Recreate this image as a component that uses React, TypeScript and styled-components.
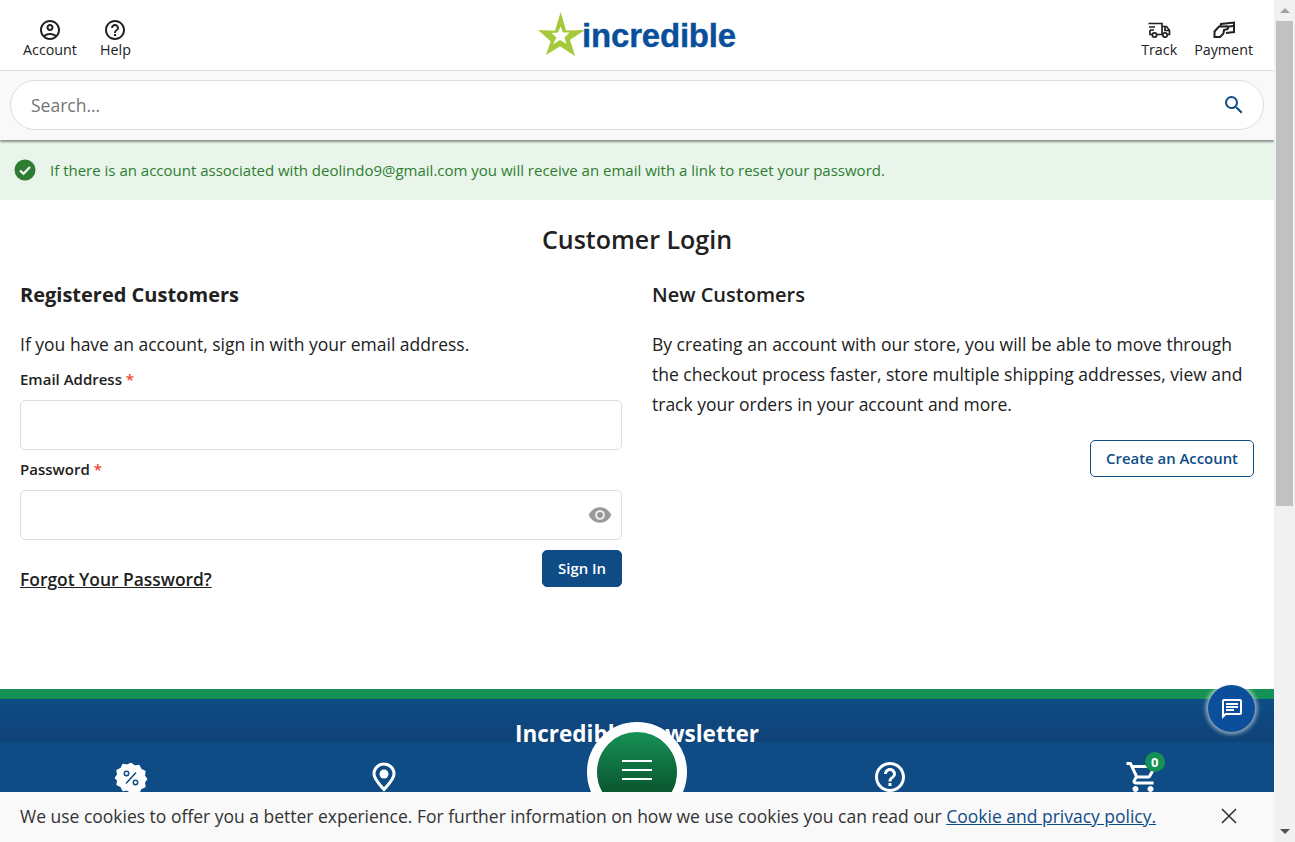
import styled, { createGlobalStyle } from 'styled-components'

const GlobalStyle = createGlobalStyle`
  html, body {
    margin: 0;
    padding: 0;
    height: 100%;
    overflow: hidden;
    background: #fff;
  }
  body {
    font-family: 'Open Sans', 'Noto Sans', sans-serif;
    color: #212121;
  }
  * {
    box-sizing: border-box;
  }
`

const Shell = styled.div`
  display: flex;
  height: 842px;
  width: 1295px;
  overflow: hidden;
`
const Page = styled.div`
  position: relative;
  flex: 0 0 1274px;
  height: 842px;
  overflow: hidden;
`
const Rail = styled.div`
  flex: 0 0 21px;
  display: flex;
  flex-direction: column;
  align-items: center;
  padding: 0 2px 0 2px;
  background: #f1f1f1;
`
const RailButton = styled.div`
  flex: 0 0 21px;
  display: flex;
  align-items: center;
  justify-content: center;
`
const Arrow = styled.span<{ $down?: boolean }>`
  width: 0;
  height: 0;
  border-left: 5px solid transparent;
  border-right: 5px solid transparent;
  ${(p) => (p.$down ? 'border-top: 5px solid #505050;' : 'border-bottom: 5px solid #a3a3a3;')}
`
const RailThumb = styled.div`
  width: 100%;
  height: 485px;
  background: #c1c1c1;
`
const RailSpace = styled.div`
  flex: 1;
`

const Header = styled.header`
  height: 71px;
  border-bottom: 1px solid #ddd;
  display: grid;
  grid-template-columns: 1fr auto 1fr;
  align-items: start;
  padding: 0 21px 0 23px;
`
const HeaderLinks = styled.div<{ $right?: boolean }>`
  display: flex;
  gap: ${(p) => (p.$right ? '17px' : '23px')};
  padding-top: 18px;
  justify-content: ${(p) => (p.$right ? 'flex-end' : 'flex-start')};
`
const HeaderLink = styled.a`
  display: flex;
  flex-direction: column;
  align-items: center;
  font-size: 14.3px;
  line-height: 20px;
  color: #212121;
  svg {
    display: block;
    margin-bottom: -2px;
  }
`
const Logo = styled.a`
  display: flex;
  align-items: center;
  height: 70px;
  padding-right: 2px;
  svg {
    margin-bottom: 2px;
  }
`
const LogoText = styled.span`
  padding-top: 2px;
  font-family: 'Liberation Sans', Arial, sans-serif;
  font-size: 33px;
  font-weight: 700;
  letter-spacing: -0.2px;
  color: #0b4f9c;
  margin-left: -3px;
  -webkit-text-stroke: 0.4px #0b4f9c;
`
const SearchBand = styled.div`
  position: relative;
  height: 69px;
  padding: 9px 10px 10px;
  background: #f9f9f9;
  box-shadow: 0 2px 2px rgba(0, 0, 0, 0.4);
`
const SearchBox = styled.div`
  height: 50px;
  display: flex;
  align-items: center;
  justify-content: space-between;
  padding: 0 17px 0 20px;
  background: #fff;
  border: 1px solid #ddd;
  border-radius: 25px;
`
const SearchPlaceholder = styled.span`
  font-size: 17.5px;
  color: #757575;
`
const Alert = styled.div`
  height: 60px;
  display: flex;
  align-items: center;
  gap: 14px;
  padding-left: 14px;
  background: #e9f5ea;
  color: #2e7d32;
  font-size: 15px;
`
const Main = styled.main`
  height: 489px;
  padding: 0 20px;
`
const Title = styled.h1`
  margin: 0;
  padding-top: 22px;
  text-align: center;
  font-size: 25px;
  line-height: 34px;
  font-weight: 600;
  color: #212121;
`
const Columns = styled.div`
  display: grid;
  grid-template-columns: 602px 602px;
  column-gap: 30px;
  margin-top: 24px;
`
const SectionTitle = styled.h2<{ $bold?: boolean }>`
  margin: 0 0 19px;
  font-size: 20px;
  line-height: 30px;
  font-weight: ${(p) => (p.$bold ? 700 : 600)};
  color: #212121;
`
const Copy = styled.p`
  margin: 0;
  padding-bottom: 1px;
  font-size: 17.5px;
  line-height: 30px;
  color: #212121;
`
const FieldLabel = styled.label`
  display: block;
  font-size: 15px;
  line-height: 20px;
  font-weight: 600;
  margin-top: 9px;
  color: #212121;
`
const Star = styled.span`
  color: #f44336;
`
const Field = styled.div`
  height: 50px;
  margin-top: 11px;
  display: flex;
  align-items: center;
  justify-content: flex-end;
  padding-right: 9px;
  background: #fff;
  border: 1px solid #ddd;
  border-radius: 5px;
  svg {
    stroke: #999;
    stroke-width: 0.5;
  }
`
const FormFooter = styled.div`
  display: flex;
  justify-content: space-between;
  align-items: flex-start;
  margin-top: 10px;
`
const ForgotLink = styled.a`
  margin-top: 14px;
  font-size: 17.4px;
  line-height: 30px;
  font-weight: 600;
  color: #212121;
  text-decoration: underline;
`
const Button = styled.a<{ $outline?: boolean }>`
  display: inline-flex;
  align-items: center;
  justify-content: center;
  height: 37px;
  padding: 0 15px 2px;
  border-radius: 5px;
  font-size: 14.9px;
  font-weight: 600;
  border: 1px solid #0f4c85;
  color: ${(p) => (p.$outline ? '#0f4c85' : '#fff')};
  background: ${(p) => (p.$outline ? '#fff' : '#0f4c85')};
`
const RightAction = styled.div`
  display: flex;
  justify-content: flex-end;
  margin-top: 20px;
`
const Footer = styled.footer`
  height: 53px;
  border-top: 10px solid #169155;
  background: linear-gradient(#0f4c85, #0f4278);
  text-align: center;
  color: #fff;
  font-size: 22.5px;
  line-height: 70px;
  font-weight: 700;
`
const BottomNav = styled.nav`
  position: absolute;
  left: 0;
  right: 0;
  bottom: 50px;
  height: 50px;
  background: #0f4c85;
  display: grid;
  grid-template-columns: repeat(5, 1fr);
  justify-items: center;
  padding: 0 5px;
`
const NavItem = styled.a`
  position: relative;
  padding-top: 17px;
  color: #fff;
  svg {
    display: block;
  }
`
const CartCount = styled.span`
  position: absolute;
  top: 10px;
  right: -4px;
  width: 20px;
  height: 20px;
  border-radius: 50%;
  background: #169155;
  color: #fff;
  font-size: 13px;
  font-weight: 700;
  line-height: 20px;
  text-align: center;
`
const MenuRing = styled.button`
  position: absolute;
  left: 587px;
  bottom: 50px;
  width: 100px;
  height: 70px;
  overflow: hidden;
  padding: 0;
  border: 0;
  background: none;
  cursor: pointer;
`
const MenuDisc = styled.span`
  display: flex;
  flex-direction: column;
  justify-content: center;
  align-items: center;
  gap: 7px;
  width: 100px;
  height: 100px;
  padding-bottom: 4px;
  border: 10px solid #fff;
  border-radius: 50%;
  background: linear-gradient(#169155, #0b5a32 70%);
`
const MenuBar = styled.span`
  display: block;
  width: 30px;
  height: 2px;
  background: #fff;
`
const Cookie = styled.div`
  position: absolute;
  left: 0;
  right: 0;
  bottom: 0;
  height: 50px;
  display: flex;
  align-items: center;
  justify-content: space-between;
  padding: 0 37px 2px 20px;
  background: #f9f9f9;
  font-size: 17.49px;
  color: #333;
`
const CookieLink = styled.a`
  color: #0f4c85;
  text-decoration: underline;
`
const ChatButton = styled.button`
  position: absolute;
  left: 1208px;
  top: 685px;
  width: 47px;
  height: 47px;
  display: flex;
  align-items: center;
  justify-content: center;
  padding: 0;
  border: 0;
  border-radius: 50%;
  background: #0b4f9c;
  color: #fff;
  box-shadow: 0 0 4px 2px rgba(255, 255, 255, 0.65), 0 1px 3px rgba(0, 0, 0, 0.4);
`

const LogoStar = () => (
  <svg width="47" height="44" viewBox="0 0 47 44" aria-hidden="true">
    <path
      fill="#a4c93a"
      d="M22.7 0L28 18.500L47 18L32 27.700L37 44L22 34.300L8 43L12.700 29.300L0 18L17 18.700Z"
    />
    <path
      fill="#fff"
      d="M22.500 14.500L25 20.500L31.500 20.500L26.500 25.500L28.500 32L22 28L15 32.500L18.500 25.500L13.500 21L20 20.500Z"
    />
  </svg>
)

const App = () => {
  return (
    <Shell>
      <GlobalStyle />
      <Page>
        <Header>
          <HeaderLinks>
            <HeaderLink>
              <svg width="24" height="24" viewBox="0 0 24 24" fill="currentColor">
                <path d="M12 2C6.480 2 2 6.480 2 12s4.480 10 10 10 10-4.480 10-10S17.520 2 12 2zM7.350 18.500C8.660 17.560 10.260 17 12 17s3.340.56 4.650 1.500C15.340 19.440 13.740 20 12 20s-3.340-.56-4.650-1.500zm10.790-1.380C16.450 15.830 14.320 15 12 15s-4.450.83-6.140 2.120C4.700 15.730 4 13.950 4 12c0-4.420 3.580-8 8-8s8 3.580 8 8c0 1.950-.7 3.730-1.860 5.120zM12 6c-1.930 0-3.500 1.570-3.500 3.500S10.070 13 12 13s3.500-1.570 3.500-3.500S13.930 6 12 6zm0 5c-.83 0-1.500-.67-1.500-1.500S11.170 8 12 8s1.500.67 1.500 1.500S12.830 11 12 11z" />
              </svg>
              Account
            </HeaderLink>
            <HeaderLink>
              <svg width="24" height="24" viewBox="0 0 24 24" fill="currentColor">
                <path d="M11 18h2v-2h-2v2zm1-16C6.480 2 2 6.480 2 12s4.480 10 10 10 10-4.480 10-10S17.520 2 12 2zm0 18c-4.410 0-8-3.590-8-8s3.590-8 8-8 8 3.590 8 8-3.590 8-8 8zm0-14c-2.210 0-4 1.790-4 4h2c0-1.100.9-2 2-2s2 .9 2 2c0 2-3 1.750-3 5h2c0-2.250 3-2.500 3-5 0-2.210-1.790-4-4-4z" />
              </svg>
              Help
            </HeaderLink>
          </HeaderLinks>
          <Logo>
            <LogoStar />
            <LogoText>incredible</LogoText>
          </Logo>
          <HeaderLinks $right>
            <HeaderLink>
              <svg width="24" height="24" viewBox="0 0 24 24" fill="none" stroke="currentColor" strokeWidth="1.700">
                <path d="M1.500 5.500H15V16.500H10" />
                <path d="M15 8.500h4.500l3 4v4h-2" />
                <path d="M18 8.500v4h4.500" />
                <path d="M2 9h6M3 12h4M3 12v4.500h2" />
                <circle cx="7.500" cy="17" r="2.200" />
                <circle cx="18" cy="17" r="2.200" />
              </svg>
              Track
            </HeaderLink>
            <HeaderLink>
              <svg width="24" height="24" viewBox="0 0 24 24" fill="none" stroke="currentColor" strokeWidth="2">
                <path d="M8.500 8L9 6L22 4.500V14L14 15" />
                <path d="M9 9.300L22 8" />
                <path d="M2.500 13.500L7 8.500H15c1.500 0 1.500 2.600 0 2.800L12 12c0 3-1 4.500-2.500 5.500L8 19H2.500Z" fill="#fff" />
              </svg>
              Payment
            </HeaderLink>
          </HeaderLinks>
        </Header>
        <SearchBand>
          <SearchBox>
            <SearchPlaceholder>Search...</SearchPlaceholder>
            <svg width="24" height="24" viewBox="0 0 24 24" fill="#0f4c85">
              <path d="M15.500 14h-.79l-.28-.27A6.470 6.470 0 0 0 16 9.500 6.500 6.500 0 1 0 9.500 16c1.610 0 3.090-.59 4.230-1.570l.27.28v.79l5 4.990L20.490 19l-4.990-5zm-6 0C7.010 14 5 11.990 5 9.500S7.010 5 9.500 5 14 7.010 14 9.500 11.990 14 9.500 14z" />
            </svg>
          </SearchBox>
        </SearchBand>
        <Alert>
          <svg width="22" height="22" viewBox="0 0 22 22">
            <circle cx="11" cy="11" r="10.500" fill="#2e7d32" />
            <path d="M6 11.500l3.500 3.300 6.500-6.800" fill="none" stroke="#fff" strokeWidth="2.200" />
          </svg>
          If there is an account associated with deolindo9@gmail.com you will receive an email with a link to reset your password.
        </Alert>
        <Main>
          <Title>Customer Login</Title>
          <Columns>
            <section>
              <SectionTitle $bold>Registered Customers</SectionTitle>
              <Copy>If you have an account, sign in with your email address.</Copy>
              <FieldLabel>
                Email Address <Star>*</Star>
              </FieldLabel>
              <Field />
              <FieldLabel>
                Password <Star>*</Star>
              </FieldLabel>
              <Field>
                <svg width="24" height="24" viewBox="0 0 24 24" fill="#999">
                  <path d="M12 4.500C7 4.500 2.730 7.610 1 12c1.730 4.390 6 7.500 11 7.500s9.270-3.110 11-7.500c-1.730-4.390-6-7.500-11-7.500zM12 17c-2.760 0-5-2.240-5-5s2.240-5 5-5 5 2.240 5 5-2.240 5-5 5zm0-8c-1.660 0-3 1.340-3 3s1.340 3 3 3 3-1.340 3-3-1.340-3-3-3z" />
                </svg>
              </Field>
              <FormFooter>
                <ForgotLink>Forgot Your Password?</ForgotLink>
                <Button>Sign In</Button>
              </FormFooter>
            </section>
            <section>
              <SectionTitle>New Customers</SectionTitle>
              <Copy>
                By creating an account with our store, you will be able to move through the checkout process faster, store multiple shipping addresses, view and track your orders in your account and more.
              </Copy>
              <RightAction>
                <Button $outline>Create an Account</Button>
              </RightAction>
            </section>
          </Columns>
        </Main>
        <Footer>Incredible Newsletter</Footer>
        <BottomNav>
          <NavItem>
            <svg width="36" height="36" viewBox="-2 -3 36 36">
              <path
                fill="#fff"
                stroke="#fff"
                strokeWidth="1.500"
                strokeLinejoin="round"
                d="M16 1.500l3.700 2.700 4.300-.7 1.900 4 4 1.900-.7 4.300 2.300 3.300-2.300 3.300.7 4.300-4 1.900-1.900 4-4.300-.7L16 30.500l-3.700-2.700-4.300.7-1.900-4-4-1.900.7-4.300L.5 16l2.300-3.300-.7-4.300 4-1.900 1.900-4 4.300.7z"
              />
              <path d="M11 21.500L21 10.500" stroke="#0f4c85" strokeWidth="1.500" />
              <circle cx="11.500" cy="11.500" r="2.200" fill="none" stroke="#0f4c85" strokeWidth="1.500" />
              <circle cx="20.500" cy="20.500" r="2.200" fill="none" stroke="#0f4c85" strokeWidth="1.500" />
            </svg>
          </NavItem>
          <NavItem>
            <svg width="36" height="36" viewBox="-6 -3 36 36">
              <path
                fill="none"
                stroke="#fff"
                strokeWidth="3"
                d="M12 27.500C7 22 2 17 2 12a10 10 0 0 1 20 0c0 5-5 10-10 15.500z"
              />
              <circle cx="12" cy="12" r="4.500" fill="#fff" />
            </svg>
          </NavItem>
          <span />
          <NavItem>
            <svg width="36" height="36" viewBox="0 0 24 24" fill="#fff">
              <path d="M11 18h2v-2h-2v2zm1-16C6.480 2 2 6.480 2 12s4.480 10 10 10 10-4.480 10-10S17.520 2 12 2zm0 18c-4.410 0-8-3.590-8-8s3.590-8 8-8 8 3.590 8 8-3.590 8-8 8zm0-14c-2.210 0-4 1.790-4 4h2c0-1.100.9-2 2-2s2 .9 2 2c0 2-3 1.750-3 5h2c0-2.250 3-2.500 3-5 0-2.210-1.790-4-4-4z" />
            </svg>
          </NavItem>
          <NavItem>
            <svg width="36" height="36" viewBox="0 0 24 24" fill="#fff">
              <path d="M15.550 13c.75 0 1.410-.41 1.750-1.030l3.580-6.490A.996.996 0 0 0 20.010 4H5.210l-.94-2H1v2h2l3.600 7.590-1.350 2.440C4.520 15.370 5.480 17 7 17h12v-2H7l1.100-2h7.450zM6.160 6h12.150l-2.760 5H8.530L6.160 6zM7 18c-1.100 0-1.990.9-1.990 2S5.900 22 7 22s2-.9 2-2-.9-2-2-2zm10 0c-1.100 0-1.990.9-1.990 2s.89 2 1.990 2 2-.9 2-2-.9-2-2-2z" />
            </svg>
            <CartCount>0</CartCount>
          </NavItem>
        </BottomNav>
        <MenuRing aria-label="Menu">
          <MenuDisc>
            <MenuBar />
            <MenuBar />
            <MenuBar />
          </MenuDisc>
        </MenuRing>
        <Cookie>
          <span>
            We use cookies to offer you a better experience. For further information on how we use cookies you can read our{' '}
            <CookieLink>Cookie and privacy policy.</CookieLink>
          </span>
          <svg width="16" height="16" viewBox="0 0 16 16" stroke="#333" strokeWidth="1.600">
            <path d="M1 1l14 14M15 1L1 15" />
          </svg>
        </Cookie>
        <ChatButton aria-label="Chat">
          <svg width="24" height="24" viewBox="0 0 24 24" fill="currentColor">
            <path d="M20 2H4c-1.100 0-2 .9-2 2v18l4-4h14c1.100 0 2-.9 2-2V4c0-1.100-.9-2-2-2zm0 14H5.170L4 17.170V4h16v12zM6 12h8v2H6zm0-3h12v2H6zm0-3h12v2H6z" />
          </svg>
        </ChatButton>
      </Page>
      <Rail>
        <RailButton>
          <Arrow />
        </RailButton>
        <RailThumb />
        <RailSpace />
        <RailButton>
          <Arrow $down />
        </RailButton>
      </Rail>
    </Shell>
  )
}

export default App
